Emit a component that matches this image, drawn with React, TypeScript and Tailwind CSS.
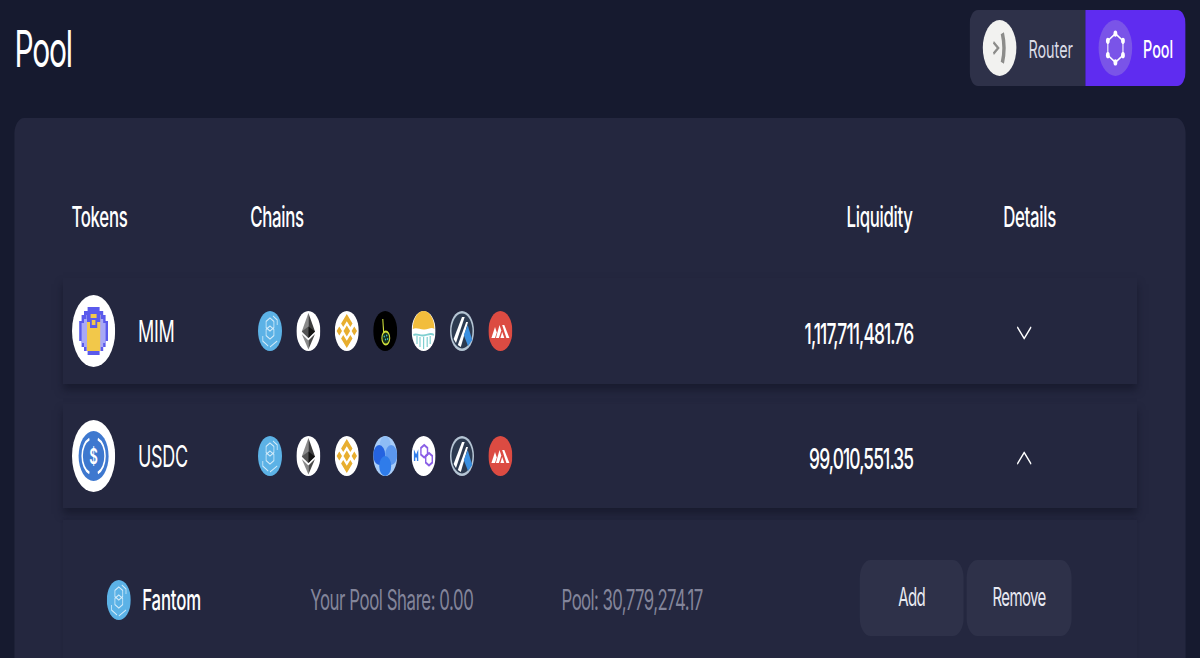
import { ChevronDown, ChevronUp } from "lucide-react";

// the reference is a wide page squeezed to 60% of its width, so the page is built at 2000px and scaled back
function Fantom() {
  return (
    <svg viewBox="0 0 40 40" className="h-full w-full">
      <circle cx="20" cy="20" r="20" fill="#5cb2e6" />
      <g fill="none" stroke="#d4ecfa" strokeWidth="1.300">
        <path d="M20 7l6.500 3.500v6L20 20l-6.500-3.500v-6z" />
        <path d="M20 15l6.500 3.500v6L20 28l-6.500-3.500v-6z" />
        <path d="M8 25v5l9 5M20 36l8-4 4-2" />
        <path d="M32 14V9l-7-4" />
      </g>
    </svg>
  );
}

function Ethereum() {
  return (
    <svg viewBox="0 0 40 40" className="h-full w-full">
      <circle cx="20" cy="20" r="20" fill="#ffffff" />
      <path d="M20 2L9 20.500l11 6.500z" fill="#8a8a8a" />
      <path d="M20 2l11 18.500L20 27z" fill="#3c3c3d" />
      <path d="M9 20.500l11-5V27z" fill="#555555" />
      <path d="M31 20.500l-11-5V27z" fill="#141414" />
      <path d="M9 23L20 38.500V29.500z" fill="#8a8a8a" />
      <path d="M31 23L20 38.500V29.500z" fill="#4a4a4a" />
    </svg>
  );
}

function Binance() {
  return (
    <svg viewBox="0 0 40 40" className="h-full w-full">
      <circle cx="20" cy="20" r="20" fill="#ffffff" />
      <g fill="#e8ae2f">
        <path d="M20 3l9.500 9.500-3.600 3.600L20 10.200l-5.900 5.900-3.600-3.600z" />
        <path d="M20 37l9.500-9.500-3.600-3.600L20 29.800l-5.900-5.900-3.600 3.600z" />
        <path d="M20 14.500l5.500 5.500-5.500 5.500-5.500-5.500z" />
        <path d="M7.500 15.500L12 20l-4.500 4.500L3 20z" />
        <path d="M32.500 15.500L37 20l-4.500 4.500L28 20z" />
      </g>
    </svg>
  );
}

function Boba() {
  return (
    <svg viewBox="0 0 40 40" className="h-full w-full">
      <circle cx="20" cy="20" r="20" fill="#000000" />
      <path d="M16 8l1.500 14" fill="none" stroke="#cfe03a" strokeWidth="1.800" />
      <circle cx="21" cy="27" r="6.500" fill="#17301c" stroke="#cfe03a" strokeWidth="1.800" />
      <g fill="#3fc0c8">
        <circle cx="18.500" cy="25.500" r="1.100" />
        <circle cx="22.500" cy="24.500" r="1.100" />
        <circle cx="20.500" cy="28.500" r="1.100" />
        <circle cx="24" cy="28" r="1.100" />
      </g>
    </svg>
  );
}

function Moonriver() {
  return (
    <svg viewBox="0 0 40 40" className="h-full w-full">
      <circle cx="20" cy="20" r="20" fill="#ffffff" />
      <path d="M2 18a18 18 0 0 1 36 0c-5-2.500-11 1-18 .5S7 16 2 18z" fill="#f2bd3c" />
      <g fill="none" stroke="#7fcfd0" strokeWidth="2">
        <path d="M3 24c5-2 10 1 17 .5s12-3 17-.5" />
        <path d="M9 25v8M14 26v10M20 26v12M26 26v10M31 25v8" />
      </g>
    </svg>
  );
}

function Arbitrum() {
  return (
    <svg viewBox="0 0 40 40" className="h-full w-full">
      <circle cx="20" cy="20" r="20" fill="#b5c5d4" />
      <circle cx="20" cy="20" r="17.500" fill="#2c3a50" />
      <path d="M6 28L20 6h4.500L10 32z" fill="#ffffff" />
      <path d="M13 34L27 11h3L18 36z" fill="#ffffff" />
      <path d="M23 24l6.500-10 7.500 15-7 6z" fill="#3a8fe0" />
    </svg>
  );
}

function Avalanche() {
  return (
    <svg viewBox="0 0 40 40" className="h-full w-full">
      <circle cx="20" cy="20" r="20" fill="#dc4b42" />
      <g fill="#ffffff">
        <path d="M5 27l6-11 3 5.500-3 5.500z" />
        <path d="M12.500 27l6-13 3 5.500-4 7.500z" />
        <path d="M20 27l3-6 3.500 6z" />
        <path d="M23 14h3.500l8.500 13h-5z" />
      </g>
    </svg>
  );
}

function Orbit() {
  return (
    <svg viewBox="0 0 40 40" className="h-full w-full">
      <circle cx="20" cy="20" r="20" fill="#a9cdf8" />
      <circle cx="20" cy="9" r="9" fill="#8fbdf5" />
      <circle cx="10" cy="19" r="10" fill="#2563e0" />
      <circle cx="30" cy="19" r="10" fill="#5b97ee" />
      <circle cx="20" cy="30" r="10" fill="#2f7cea" />
    </svg>
  );
}

function Polygon() {
  return (
    <svg viewBox="0 0 40 40" className="h-full w-full">
      <circle cx="20" cy="20" r="20" fill="#ffffff" />
      <path d="M5 25v-8l2.500 3.500L10 17v8" fill="none" stroke="#2f7cea" strokeWidth="2.400" />
      <g fill="none" stroke="#8a5fe6" strokeWidth="2.400">
        <path d="M21 9l5.500 3v6.500L21 21.500l-5.500-3V12z" />
        <path d="M29 17l5.500 3v6.500L29 29.500l-5.500-3V20z" />
      </g>
    </svg>
  );
}

function MimToken() {
  return (
    <svg viewBox="0 0 72 72" className="h-full w-full">
      <circle cx="36" cy="36" r="36" fill="#ffffff" />
      <path d="M26 12h20v4h6v4h4v6h4v20h-4v6h-4v4h-6v4H26v-4h-6v-4h-4v-6h-4V26h4v-6h4v-4h6z" fill="#5a5aec" />
      <path d="M16 28h4v-4h4v-4h4v36h-4v-4h-4v-4h-4zM56 28h-4v-4h-4v-4h-4v36h4v-4h4v-4h4z" fill="#a8a8f6" />
      <path d="M25 19h22v37H25z" fill="#f2c84a" />
      <path d="M25 19h6v4h10v-4h6v8h-5v6h-12v-6h-5z" fill="#5a5aec" />
      <path d="M33 25h6v5h-6z" fill="#f2c84a" />
    </svg>
  );
}

function UsdcToken() {
  return (
    <svg viewBox="0 0 72 72" className="h-full w-full">
      <circle cx="36" cy="36" r="36" fill="#ffffff" />
      <circle cx="36" cy="36" r="25" fill="#3e78cf" />
      <g fill="none" stroke="#ffffff" strokeWidth="2.500">
        <path d="M29 19a18 18 0 0 0 0 34" />
        <path d="M43 19a18 18 0 0 1 0 34" />
      </g>
      <text x="36" y="44" textAnchor="middle" fill="#ffffff" fontSize="22" fontWeight="600" fontFamily="Inter, sans-serif">
        $
      </text>
    </svg>
  );
}

function TokenRow({
  icon,
  name,
  chains,
  amount,
  open,
  className,
}: {
  icon: React.ReactNode;
  name: string;
  chains: React.ReactNode[];
  amount: string;
  open?: boolean;
  className: string;
}) {
  return (
    <div className={`grid grid-cols-[310px_790px_302px_1fr] items-center bg-[#24273f] px-[15px] shadow-[0_6px_10px_rgba(14,16,32,0.5)] ${className}`}>
      <div className="flex items-center gap-[38px]">
        <div className="h-[72px] w-[72px]">{icon}</div>
        <span className="text-[30px] tracking-[-0.5px] text-white">{name}</span>
      </div>
      <div className="flex items-center gap-6">
        {chains.map((c, i) => (
          <div key={i} className="h-10 w-10">
            {c}
          </div>
        ))}
      </div>
      <div className="pt-[6px] text-right text-[29px] font-medium tracking-[-1.5px] text-white">{amount}</div>
      <div className="pl-[163px] pt-[3px] text-white">
        {open ? <ChevronUp size={44} strokeWidth={1} /> : <ChevronDown size={44} strokeWidth={1} />}
      </div>
    </div>
  );
}

export default function App() {
  return (
    <div className="h-[658px] w-[1200px] overflow-hidden bg-[#161a2f]">
      <div className="h-[658px] w-[2000px] origin-top-left scale-x-[0.6] font-['Inter',sans-serif]">
        <div className="flex h-[118px] items-start justify-between px-6 pt-[10px]">
          <h1 className="mt-[7px] text-[50px] leading-[64px] tracking-[-2px] text-white">Pool</h1>
          <div className="flex h-[76px] overflow-hidden rounded-[14px]">
            <div className="flex w-[193px] items-center gap-5 bg-[#2e3149] pl-[22px]">
              <div className="flex h-14 w-14 items-center justify-center rounded-full bg-[#f2f2f0]">
                <svg viewBox="0 0 28 28" className="h-8 w-8" fill="none" stroke="#8c8c8a">
                  <path d="M5 9l7 5-7 5" strokeWidth="2.500" />
                  <path d="M18 1c3 8 3 18 0 26" strokeWidth="5" />
                </svg>
              </div>
              <span className="mt-1 text-[24px] text-[#d9dbe6]">Router</span>
            </div>
            <div className="flex w-[167px] items-center gap-[18px] bg-[#5f2cf0] pl-[22px]">
              <div className="flex h-14 w-14 items-center justify-center rounded-full bg-[#7a54e8]">
                <svg viewBox="0 0 40 40" className="h-9 w-9" fill="none" stroke="#ffffff" strokeWidth="2">
                  <path d="M20 4l14 8v16l-14 8-14-8V12z" />
                  <g fill="#ffffff" stroke="none">
                    <circle cx="20" cy="4" r="3.500" />
                    <circle cx="34" cy="12" r="3.500" />
                    <circle cx="34" cy="28" r="3.500" />
                    <circle cx="20" cy="36" r="3.500" />
                    <circle cx="6" cy="28" r="3.500" />
                    <circle cx="6" cy="12" r="3.500" />
                  </g>
                </svg>
              </div>
              <span className="mt-1 text-[24px] font-medium text-white">Pool</span>
            </div>
          </div>
        </div>

        <div className="mx-6 h-[540px] rounded-t-2xl bg-[#24273f] px-[81px] pt-[78px]">
          <div className="mb-[40px] grid grid-cols-[298px_802px_302px_1fr] items-center px-[14px] text-[28px] font-medium tracking-[-0.5px] text-white">
            <span>Tokens</span>
            <span>Chains</span>
            <span className="text-right">Liquidity</span>
            <span className="pl-[151px]">Details</span>
          </div>
          <TokenRow
            className="mb-5 h-[106px]"
            icon={<MimToken />}
            name="MIM"
            amount="1,117,711,481.76"
            chains={[<Fantom />, <Ethereum />, <Binance />, <Boba />, <Moonriver />, <Arbitrum />, <Avalanche />]}
          />
          <TokenRow
            open
            className="mb-3 h-[104px]"
            icon={<UsdcToken />}
            name="USDC"
            amount="99,010,551.35"
            chains={[<Fantom />, <Ethereum />, <Binance />, <Orbit />, <Polygon />, <Arbitrum />, <Avalanche />]}
          />
          <div className="flex h-[160px] items-start bg-[#24273f] pt-[40px] shadow-[0_0_4px_rgba(14,16,32,0.2)]">
            <div className="flex w-[412px] items-center gap-[19px] pl-[73px] pt-[19px]">
              <div className="h-10 w-10">
                <Fantom />
              </div>
              <span className="text-[28px] font-medium tracking-[-0.3px] text-white">Fantom</span>
            </div>
            <span className="w-[419px] pt-[19px] text-[28px] tracking-[-0.7px] text-[#83859a]">Your Pool Share: 0.00</span>
            <span className="w-[497px] pt-[19px] text-[28px] tracking-[-1px] text-[#83859a]">Pool: 30,779,274.17</span>
            <div className="flex gap-[5px] text-[25px] tracking-[-1px] text-[#e8e9f2]">
              <button className="h-[76px] w-[173px] rounded-[18px] bg-[#2e3149]">Add</button>
              <button className="h-[76px] w-[175px] rounded-[18px] bg-[#2e3149]">Remove</button>
            </div>
          </div>
        </div>
      </div>
    </div>
  );
}
